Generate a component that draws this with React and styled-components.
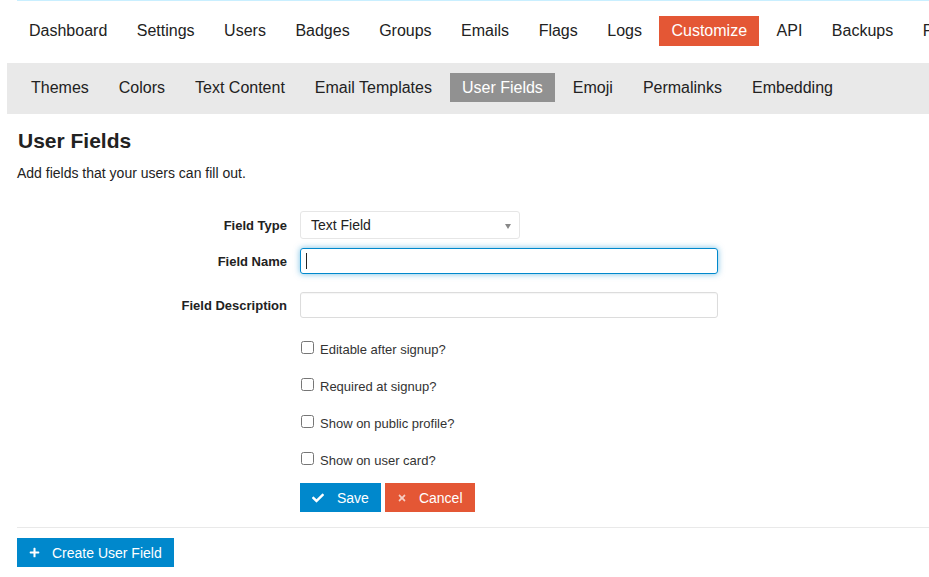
import React from 'react';
import styled, { createGlobalStyle } from 'styled-components';
import { FaCheck, FaTimes, FaPlus } from 'react-icons/fa';

const GlobalStyle = createGlobalStyle`
  body {
    margin: 0;
    overflow: hidden;
    background: #fff;
    color: #222;
    font-family: "Liberation Sans", Arial, sans-serif;
  }
`;

const mainTabs = ['Dashboard', 'Settings', 'Users', 'Badges', 'Groups', 'Emails', 'Flags', 'Logs', 'Customize', 'API', 'Backups', 'Plugins'];
const subTabs = ['Themes', 'Colors', 'Text Content', 'Email Templates', 'User Fields', 'Emoji', 'Permalinks', 'Embedding'];
const checks = ['Editable after signup?', 'Required at signup?', 'Show on public profile?', 'Show on user card?'];

function App() {
  return (
    <>
      <GlobalStyle />
      <TopLine />
      <MainNav>
        {mainTabs.map((t) => (
          <MainTab key={t} $active={t === 'Customize'}>{t}</MainTab>
        ))}
      </MainNav>
      <SubNav>
        {subTabs.map((t) => (
          <SubTab key={t} $active={t === 'User Fields'}>{t}</SubTab>
        ))}
      </SubNav>
      <Content>
        <Title>User Fields</Title>
        <Intro>Add fields that your users can fill out.</Intro>
        <Form>
          <Label $mb={9}>Field Type</Label>
          <SelectBox $mb={9}>
            Text Field
            <Arrow />
          </SelectBox>

          <Label $mb={18}>Field Name</Label>
          <TextBox $focused $mb={18}><Caret /></TextBox>

          <Label $mb={21}>Field Description</Label>
          <TextBox $mb={21} />

          {checks.map((c, i) => (
            <React.Fragment key={c}>
              <span />
              <CheckRow $mb={i === checks.length - 1 ? 13 : 17}>
                <Box type="checkbox" />
                {c}
              </CheckRow>
            </React.Fragment>
          ))}

          <span />
          <Buttons>
            <Button $color="#0088cc" $gap={13}>
              <FaCheck size={12} />
              Save
            </Button>
            <Button $color="#e45735" $gap={12} $iconFade>
              <FaTimes size={10} />
              Cancel
            </Button>
          </Buttons>
        </Form>
        <Rule />
        <Button $color="#0088cc" $gap={12}>
          <FaPlus size={11} />
          Create User Field
        </Button>
      </Content>
    </>
  );
}

const TopLine = styled.div`
  height: 1px;
  margin-left: 17px;
  background: #c9efff;
`;

const MainNav = styled.ul`
  display: flex;
  gap: 5.5px;
  margin: 15px 0 0;
  padding: 0 0 0 17px;
  list-style: none;
  white-space: nowrap;
  overflow: hidden;
`;

const MainTab = styled.li`
  flex: none;
  height: 30px;
  line-height: 30px;
  padding: 0 12px;
  font-size: 16px;
  color: ${(p) => (p.$active ? '#fff' : '#222')};
  background: ${(p) => (p.$active ? '#e45735' : 'transparent')};
`;

const SubNav = styled.ul`
  display: flex;
  gap: 6px;
  height: 51px;
  box-sizing: border-box;
  margin: 17px 0 0 7px;
  padding: 10px 0 0 12px;
  list-style: none;
  white-space: nowrap;
  background: #e9e9e9;
`;

const SubTab = styled.li`
  flex: none;
  height: 29px;
  line-height: 29px;
  padding: 0 12px;
  font-size: 16px;
  color: ${(p) => (p.$active ? '#fff' : '#222')};
  background: ${(p) => (p.$active ? '#919191' : 'transparent')};
`;

const Content = styled.div`
  padding-left: 17px;
`;

const Title = styled.h1`
  margin: 14px 0 0 1px;
  font-size: 21px;
  line-height: 25px;
  font-weight: bold;
`;

const Intro = styled.p`
  margin: 10px 0 0;
  font-size: 14px;
  line-height: 20px;
`;

const Form = styled.div`
  display: grid;
  grid-template-columns: 270px 1fr;
  column-gap: 13px;
  align-items: center;
  margin-top: 28px;
`;

const Label = styled.label`
  text-align: right;
  font-size: 13px;
  font-weight: bold;
  margin-bottom: ${(p) => p.$mb}px;
`;

const SelectBox = styled.div`
  display: flex;
  align-items: center;
  justify-content: space-between;
  box-sizing: border-box;
  width: 220px;
  height: 28px;
  padding: 0 8px 0 10px;
  border: 1px solid #e6e6e6;
  border-radius: 3px;
  font-size: 14px;
  margin-bottom: ${(p) => p.$mb}px;
`;

const Arrow = styled.span`
  width: 0;
  height: 0;
  border-left: 3.5px solid transparent;
  border-right: 3.5px solid transparent;
  border-top: 5px solid #888;
  margin-top: 2px;
`;

const TextBox = styled.div`
  display: flex;
  align-items: center;
  box-sizing: border-box;
  width: 418px;
  height: 26px;
  padding: 0 5px;
  border: 1px solid ${(p) => (p.$focused ? '#0088cc' : '#dcdcdc')};
  border-radius: 3px;
  box-shadow: ${(p) => (p.$focused ? '0 0 6px rgba(0, 136, 204, 0.55)' : 'inset 0 1px 1px rgba(0,0,0,0.04)')};
  margin-bottom: ${(p) => p.$mb}px;
`;

const Caret = styled.span`
  width: 1px;
  height: 16px;
  background: #222;
`;

const CheckRow = styled.label`
  display: flex;
  align-items: center;
  height: 20px;
  font-size: 13px;
  color: #333;
  margin-bottom: ${(p) => p.$mb}px;
`;

const Box = styled.input`
  width: 13px;
  height: 13px;
  margin: -4px 6px 0 1px;
`;

const Buttons = styled.div`
  display: flex;
  gap: 4px;
`;

const Button = styled.button`
  display: inline-flex;
  align-items: center;
  gap: ${(p) => p.$gap}px;
  height: 29px;
  padding: 0 12px;
  border: none;
  border-radius: 0;
  background: ${(p) => p.$color};
  color: #fff;
  font-family: inherit;
  font-size: 14px;
  svg {
    opacity: ${(p) => (p.$iconFade ? 0.7 : 1)};
  }
`;

const Rule = styled.hr`
  height: 1px;
  margin: 15px 0 10px;
  border: none;
  background: #e9e9e9;
`;

export default App;
